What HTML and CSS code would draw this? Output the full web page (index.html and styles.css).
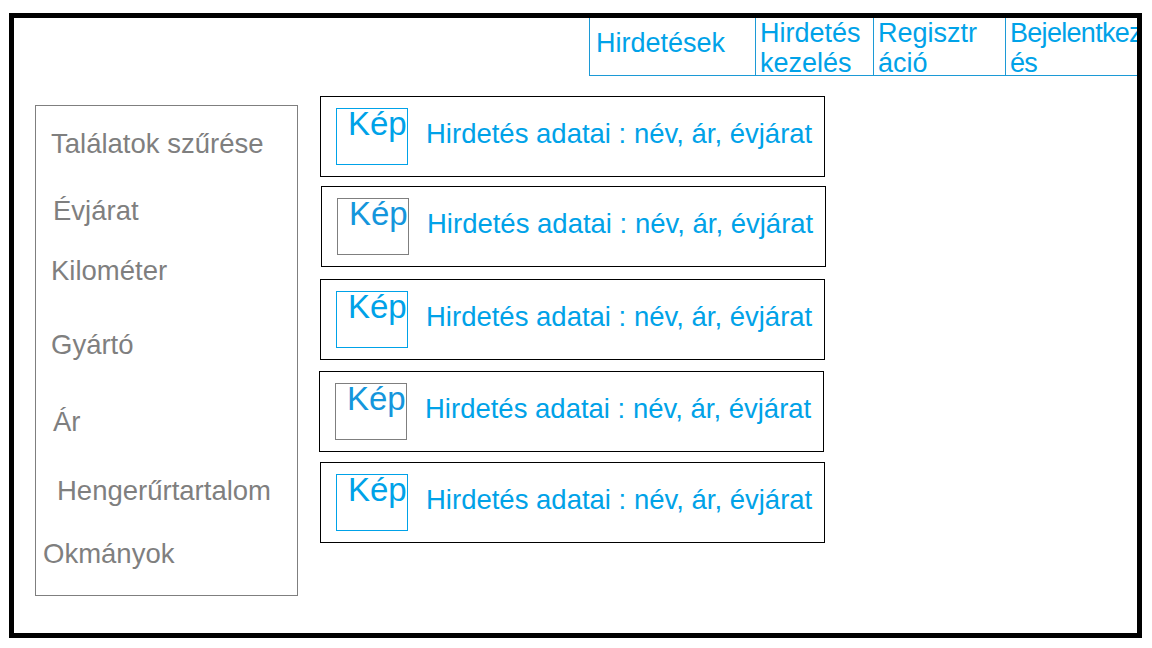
FILE: index.html
```html
<!DOCTYPE html>
<html lang="hu">
<head>
<meta charset="utf-8">
<title>Hirdetések</title>
<link rel="stylesheet" href="styles.css">
</head>
<body>
<div class="frame">
  <nav class="nav">
    <div class="nav-cell c1 single">Hirdetések</div>
    <div class="nav-cell c2">Hirdetés kezelés</div>
    <div class="nav-cell c3">Regisztr<wbr>áció</div>
    <div class="nav-cell c4">Bejelentkez<wbr>és</div>
  </nav>
  <div class="main">
    <aside class="filters">
      <div class="filter">Találatok szűrése</div>
      <div class="filter">Évjárat</div>
      <div class="filter">Kilométer</div>
      <div class="filter">Gyártó</div>
      <div class="filter">Ár</div>
      <div class="filter">Hengerűrtartalom</div>
      <div class="filter">Okmányok</div>
    </aside>
    <section class="list">
      <div class="card">
        <div class="pic">Kép</div>
        <div class="info">Hirdetés adatai : név, ár, évjárat</div>
      </div>
      <div class="card">
        <div class="pic gray">Kép</div>
        <div class="info">Hirdetés adatai : név, ár, évjárat</div>
      </div>
      <div class="card">
        <div class="pic">Kép</div>
        <div class="info">Hirdetés adatai : név, ár, évjárat</div>
      </div>
      <div class="card">
        <div class="pic gray">Kép</div>
        <div class="info">Hirdetés adatai : név, ár, évjárat</div>
      </div>
      <div class="card">
        <div class="pic">Kép</div>
        <div class="info">Hirdetés adatai : név, ár, évjárat</div>
      </div>
    </section>
  </div>
</div>
</body>
</html>
```

FILE: styles.css
```css
html, body {
  margin: 0;
  padding: 0;
  background: #ffffff;
}

body {
  font-family: "Liberation Sans", Arial, sans-serif;
  font-size: 27px;
  line-height: 30px;
}

.frame {
  box-sizing: border-box;
  width: 1133px;
  height: 625px;
  margin: 13px 0 0 9px;
  border: 5px solid #000000;
  overflow: hidden;
}

/* top navigation */
.nav {
  display: flex;
  justify-content: flex-end;
}

.nav-cell {
  box-sizing: border-box;
  height: 58px;
  border-left: 1px solid #1c9ad6;
  border-bottom: 1px solid #1c9ad6;
  color: #00a2e8;
  padding-left: 4px;
}

.nav-cell.single {
  padding-top: 10px;
  padding-left: 6px;
}

.c1 { width: 166px; }
.c2 { width: 118px; }
.c3 { width: 132px; }
.c4 {
  width: 132px;
  padding-left: 4px;
  letter-spacing: -0.7px;
}

/* main row */
.main {
  display: flex;
  align-items: flex-start;
  margin-top: 20px;
}

.filters {
  box-sizing: border-box;
  width: 263px;
  height: 491px;
  margin: 9px 0 0 21px;
  border: 1px solid #7f7f7f;
  color: #7f7f7f;
  font-size: 27.5px;
}

.filter { white-space: nowrap; }
.filter:nth-child(1) { margin: 23px 0 0 15px; }
.filter:nth-child(2) { margin: 37px 0 0 17px; }
.filter:nth-child(3) { margin: 30px 0 0 15px; }
.filter:nth-child(4) { margin: 44px 0 0 15px; }
.filter:nth-child(5) { margin: 47px 0 0 17px; }
.filter:nth-child(6) { margin: 39px 0 0 21px; }
.filter:nth-child(7) { margin: 33px 0 0 7px; }

/* result cards */
.list {
  display: flex;
  flex-direction: column;
  margin-left: 22px;
}

.card {
  box-sizing: border-box;
  width: 505px;
  height: 81px;
  border: 1px solid #000000;
  display: flex;
  align-items: flex-start;
}

.card:nth-child(2) { margin-top: 9px; margin-left: 1px; }
.card:nth-child(3) { margin-top: 12px; }
.card:nth-child(4) { margin-top: 11px; margin-left: -1px; }
.card:nth-child(5) { margin-top: 10px; }

.pic {
  box-sizing: border-box;
  flex: none;
  width: 72px;
  height: 57px;
  margin: 11px 0 0 15px;
  border: 1px solid #00a2e8;
  color: #00a2e8;
  font-size: 33px;
  line-height: 30px;
  padding-left: 11px;
  white-space: nowrap;
}

.pic.gray {
  border-color: #7f7f7f;
  color: #1596dc;
}

.info {
  margin: 22px 0 0 18px;
  color: #00a2e8;
  font-size: 27.5px;
  white-space: nowrap;
}
```
